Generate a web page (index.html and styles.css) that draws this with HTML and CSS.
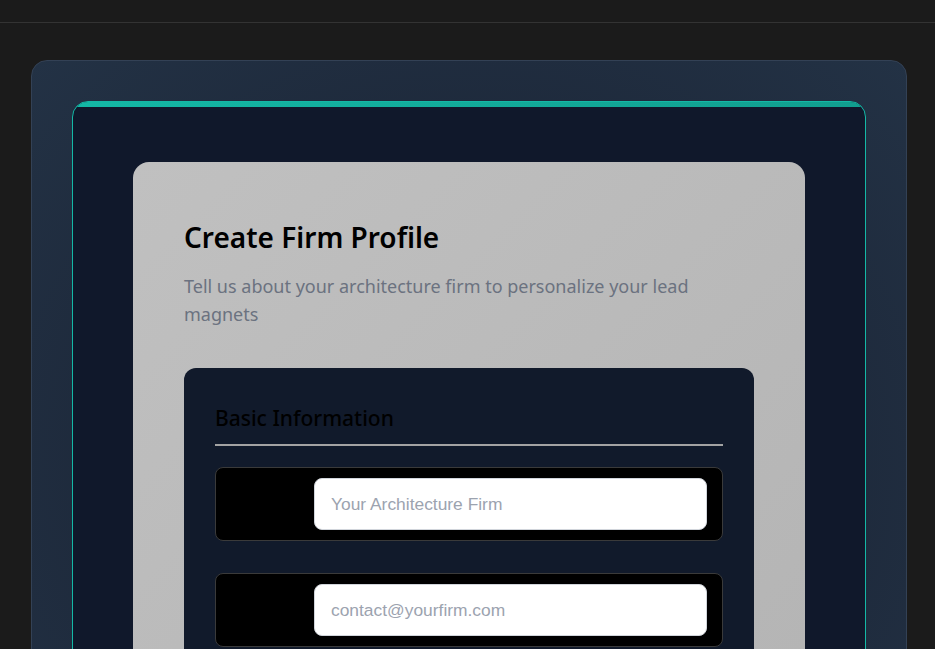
FILE: index.html
```html
<!DOCTYPE html>
<html lang="en">
<head>
<meta charset="utf-8">
<title>Create Firm Profile</title>
<link rel="stylesheet" href="styles.css">
</head>
<body>
<header class="topbar"></header>
<main class="page">
  <div class="shell">
    <div class="frame">
      <section class="card">
        <h1 class="title">Create Firm Profile</h1>
        <p class="lead">Tell us about your architecture firm to personalize your lead magnets</p>
        <div class="section">
          <h2 class="section-title">Basic Information</h2>
          <div class="field">
            <label class="field-label" for="firm">Firm Name</label>
            <input class="field-input" id="firm" type="text" placeholder="Your Architecture Firm">
          </div>
          <div class="field">
            <label class="field-label" for="email">Email</label>
            <input class="field-input" id="email" type="email" placeholder="contact@yourfirm.com">
          </div>
        </div>
      </section>
    </div>
  </div>
</main>
</body>
</html>
```
FILE: styles.css
```css
* { box-sizing: border-box; }
html, body { margin: 0; padding: 0; overflow: hidden; }
body {
  background: #1b1b1b;
  font-family: "Noto Sans", "Open Sans", sans-serif;
  height: 649px;
}
.topbar {
  height: 23px;
  border-bottom: 1px solid #333333;
  background: #1b1b1b;
}
.page {
  padding: 37px 28px 0 31px;
}
.shell {
  background: radial-gradient(ellipse at center, #1e2a3c 60%, #233245 100%);
  border: 1px solid #334155;
  border-radius: 16px;
  padding: 40px;
}
.frame {
  position: relative;
  background: #10182b;
  border: 1px solid #14b8a6;
  border-radius: 16px;
  padding: 60px;
  overflow: hidden;
}
.frame::before {
  content: "";
  position: absolute;
  top: -1px;
  left: 0;
  right: 0;
  height: 6px;
  background: linear-gradient(90deg, #14b8a6, #119e8f);
}
.card {
  background: linear-gradient(135deg, #c0c0c0 0%, #b4b4b4 100%);
  border-radius: 16px;
  padding: 57px 51px 51px;
}
.title {
  margin: 0;
  font-size: 28px;
  line-height: 36px;
  font-weight: 600;
  color: #000;
}
.lead {
  margin: 17px 0 0;
  font-size: 18px;
  line-height: 28px;
  color: #6b7280;
}
.section {
  margin-top: 40px;
  background: #111a2b;
  border-radius: 12px;
  padding: 36px 31px 32px;
}
.section-title {
  margin: 0 0 21px;
  padding-bottom: 12px;
  font-size: 21px;
  line-height: 28px;
  font-weight: 500;
  color: #000;
  border-bottom: 2px solid #a3a3a3;
}
.field {
  display: grid;
  grid-template-columns: 88px 1fr;
  align-items: center;
  background: #000;
  border: 1px solid #3a3a3a;
  border-radius: 8px;
  padding: 10px 15px 10px 10px;
  margin-bottom: 32px;
}
.field-label {
  color: #000;
  font-size: 14px;
}
.field-input {
  height: 52px;
  width: 100%;
  border: 1px solid #d1d5db;
  border-radius: 8px;
  background: #fff;
  padding: 0 16px;
  font-family: "Liberation Sans", Arial, sans-serif;
  font-size: 17.4px;
  color: #111;
  outline: none;
}
.field-input::placeholder { color: #9ca3af; }
```
